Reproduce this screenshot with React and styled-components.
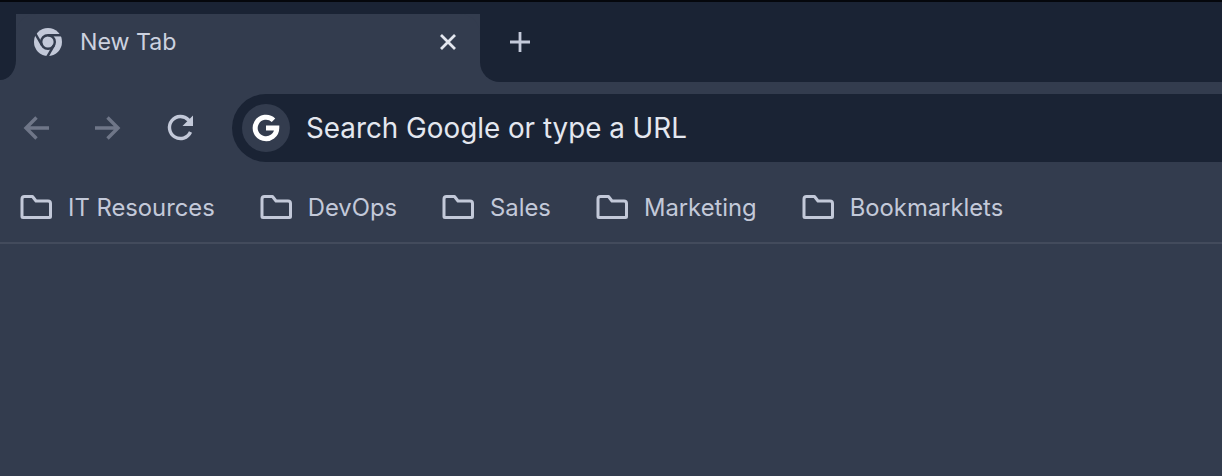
import React from 'react';
import styled, { createGlobalStyle } from 'styled-components';

const dark = '#1a2334';
const chrome = '#333c4e';
const line = '#c3c9d9';
const dim = '#6f7688';

const GlobalStyle = createGlobalStyle`
  html, body {
    margin: 0;
    height: 100%;
    background: ${chrome};
    overflow: hidden;
  }
  #root {
    height: 100%;
  }
`;

const Window = styled.div`
  height: 100%;
  font-family: Inter, "Liberation Sans", sans-serif;
`;

const TopEdge = styled.div`
  height: 2px;
  background: #05070c;
`;

const TabHeadroom = styled.div`
  height: 12px;
  background: ${dark};
`;

const TabRow = styled.div`
  display: flex;
  height: 68px;
`;

const TabGutter = styled.div`
  width: 16px;
  margin-bottom: 2px;
  background: ${dark};
  border-bottom-right-radius: 16px 20px;
`;

const Tab = styled.div`
  width: 464px;
  display: flex;
  align-items: center;
  box-sizing: border-box;
  padding: 0 24px 13px 18px;
  background: ${chrome};
  border-radius: 20px 20px 0 0;
  color: #ccd1df;
  font-size: 23.200px;
`;

const TabTitle = styled.span`
  flex: 1;
  margin-left: 18px;
`;

const TabStripRest = styled.div`
  flex: 1;
  display: flex;
  align-items: flex-start;
  padding: 18px 0 0 30px;
  background: ${dark};
  border-bottom-left-radius: 20px;
`;

const Toolbar = styled.div`
  display: flex;
  align-items: center;
  height: 68px;
  padding: 12px 0 0 22px;
`;

const NavButton = styled.div`
  display: flex;
  width: 30px;
  height: 30px;
  margin-right: ${p => p.$gap}px;
`;

const Omnibox = styled.div`
  flex: 1;
  display: flex;
  align-items: center;
  height: 68px;
  padding-left: 10px;
  background: ${dark};
  border-radius: 34px 0 0 34px;
`;

const GoogleBadge = styled.div`
  display: flex;
  align-items: center;
  justify-content: center;
  width: 48px;
  height: 48px;
  border-radius: 50%;
  background: ${chrome};
`;

const OmniText = styled.span`
  margin-left: 16px;
  color: #e4e7ef;
  font-size: 27.800px;
`;

const BookmarkBar = styled.div`
  display: flex;
  align-items: center;
  height: 82px;
  padding: 10px 0 0 20px;
  box-sizing: border-box;
  border-bottom: 2px solid #434b5c;
`;

const Bookmark = styled.div`
  display: flex;
  align-items: center;
  gap: 16px;
  margin-right: 45px;
  color: ${line};
  font-size: 23.800px;
`;

const ChromeLogo = () => (
  <svg width="28" height="28" viewBox="0 0 28 28">
    <circle cx="14" cy="14" r="14" fill={line} />
    <circle cx="14" cy="14" r="6.800" fill={line} stroke={chrome} strokeWidth="2.400" />
    {[0, 120, 240].map(angle => (
      <path
        key={angle}
        d="M14 7.200H28.500"
        stroke={chrome}
        strokeWidth="2.400"
        transform={`rotate(${angle} 14 14)`}
      />
    ))}
  </svg>
);

const Folder = () => (
  <svg width="32" height="24" viewBox="0 0 32 24" fill="none" stroke={line} strokeWidth="3" strokeLinejoin="round">
    <path d="M2 21.500V4c0-1.400.8-2.500 2.500-2.500h8L16 6h12c1.600 0 2.500 1 2.500 2.500v13c0 .6-.4 1-1 1H3c-.6 0-1-.4-1-1z" />
  </svg>
);

const ArrowLeft = () => (
  <svg width="30" height="30" viewBox="0 0 30 30" fill="none" stroke={dim} strokeWidth="3.400">
    <path d="M27 15H4M14.500 4.500 4 15l10.500 10.500" />
  </svg>
);

const ArrowRight = () => (
  <svg width="30" height="30" viewBox="0 0 30 30" fill="none" stroke={dim} strokeWidth="3.400">
    <path d="M3 15h23M15.500 4.500 26 15 15.500 25.500" />
  </svg>
);

const Reload = () => (
  <svg width="30" height="30" viewBox="0 0 30 30" fill="none" stroke={line} strokeWidth="3.400">
    <path d="M24.500 19A11 11 0 1 1 22.500 7L26 11" />
    <path d="M27 2.500v10.500H16.500z" fill={line} stroke="none" />
  </svg>
);

const CloseIcon = () => (
  <svg width="16" height="16" viewBox="0 0 16 16" stroke="#e4e7ef" strokeWidth="2.800">
    <path d="M1 1l14 14M15 1 1 15" />
  </svg>
);

const PlusIcon = () => (
  <svg width="20" height="20" viewBox="0 0 20 20" stroke={line} strokeWidth="2.800">
    <path d="M10 0v20M0 10h20" />
  </svg>
);

const GoogleMark = () => (
  <svg width="28" height="28" viewBox="0 0 28 28" fill="none" stroke="#fff" strokeWidth="5">
    <path d="M21.500 6.200A10.800 10.800 0 1 0 24.800 14H14" />
  </svg>
);

const bookmarks = ['IT Resources', 'DevOps', 'Sales', 'Marketing', 'Bookmarklets'];

export default function App() {
  return (
    <Window>
      <GlobalStyle />
      <TopEdge />
      <TabHeadroom />
      <TabRow>
        <TabGutter />
        <Tab>
          <ChromeLogo />
          <TabTitle>New Tab</TabTitle>
          <CloseIcon />
        </Tab>
        <TabStripRest>
          <PlusIcon />
        </TabStripRest>
      </TabRow>
      <Toolbar>
        <NavButton $gap={40}><ArrowLeft /></NavButton>
        <NavButton $gap={44}><ArrowRight /></NavButton>
        <NavButton $gap={36}><Reload /></NavButton>
        <Omnibox>
          <GoogleBadge><GoogleMark /></GoogleBadge>
          <OmniText>Search Google or type a URL</OmniText>
        </Omnibox>
      </Toolbar>
      <BookmarkBar>
        {bookmarks.map(name => (
          <Bookmark key={name}>
            <Folder />
            {name}
          </Bookmark>
        ))}
      </BookmarkBar>
    </Window>
  );
}
